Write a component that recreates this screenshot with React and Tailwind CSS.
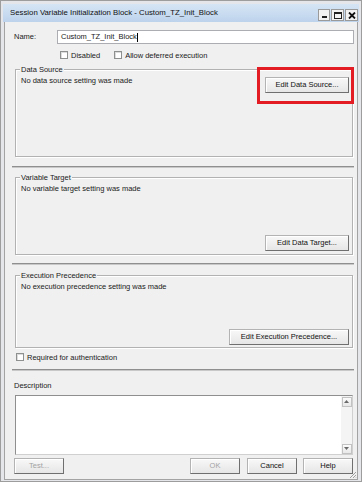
import React from 'react';

function Check({ label, className = '' }) {
  return (
    <div className={`flex items-center ${className}`}>
      <span className="w-[8px] h-[8px] border border-[#8e8f8f] bg-white shadow-[inset_1px_1px_0_#dcdcdc]" />
      <span className="ml-[3px] leading-[9px]">{label}</span>
    </div>
  );
}

function Btn({ children, className = '', disabled }) {
  return (
    <div
      className={`h-[16px] flex items-center justify-center border border-[#b3b3b3] border-r-[#6f6f6f] border-b-[#6f6f6f] bg-gradient-to-b from-[#f8f8f8] to-[#e6e6e6] shadow-[inset_1px_1px_0_#fff] leading-none ${
        disabled ? 'text-[#a3a3a3]' : 'text-[#111]'
      } ${className}`}
    >
      {children}
    </div>
  );
}

function Group({ title, className = '', children }) {
  return (
    <div
      className={`relative ml-[1px] mr-[1px] border border-[#b2b2b2] shadow-[inset_1px_1px_0_#fff,1px_1px_0_#fff] ${className}`}
    >
      <span className="absolute left-[4px] top-[-5px] bg-[#f0f0f0] px-[1px] leading-[9px]">{title}</span>
      {children}
    </div>
  );
}

function Separator({ className = '' }) {
  return <div className={`-ml-[2px] h-[2px] bg-[#8f8f8f] border-b border-[#c8c8c8] ${className}`} />;
}

function Arrow({ up }) {
  return (
    <div className="w-[10px] h-[10px] flex items-center justify-center border border-[#c2c2c2] bg-gradient-to-b from-[#fbfbfb] to-[#e8e8e8]">
      <svg width="5" height="3" viewBox="0 0 5 3">
        <path d={up ? 'M0 3 L2.5 0 L5 3 Z' : 'M0 0 L2.5 3 L5 0 Z'} fill="#6a6a6a" />
      </svg>
    </div>
  );
}

export default function App() {
  return (
    <div className="w-[362px] h-[482px] flex flex-col bg-[#e4e6e9] border border-[#9d9d9d] font-['Liberation_Sans',Arial,sans-serif] text-[7.5px] text-[#1a1a1a] overflow-hidden">
      {/* title bar */}
      <div className="mt-[3px] mx-[2px] h-[18px] flex items-center justify-between bg-gradient-to-b from-[#d6e5f5] to-[#bdd3ec] pl-[7px] pr-[1px]">
        <span className="text-[7.8px] text-[#111]">Session Variable Initialization Block - Custom_TZ_Init_Block</span>
        <div className="flex items-center gap-[1px] self-end mb-[1px]">
          <div className="w-[12px] h-[12px] flex items-end justify-center pb-[2px] border border-[#9a9a9a] bg-[#f3f3f3]">
            <span className="w-[5px] h-[2px] bg-[#222]" />
          </div>
          <div className="w-[13px] h-[12px] flex items-center justify-center border border-[#9a9a9a] bg-[#f3f3f3]">
            <span className="w-[8px] h-[7px] border border-[#222] border-t-2" />
          </div>
          <div className="w-[13px] h-[12px] flex items-center justify-center border border-[#9a9a9a] bg-[#f3f3f3]">
            <svg width="8" height="7" viewBox="0 0 8 7">
              <path d="M1 0.5 L7 6.5 M7 0.5 L1 6.5" stroke="#111" strokeWidth="1.8" />
            </svg>
          </div>
        </div>
      </div>

      {/* content */}
      <div className="relative flex-1 mx-[3px] mb-[1px] flex flex-col bg-[#f0f0f0] border-l border-r border-b border-[#a3a3a3] pl-[9px] pr-[3px]">
        <div className="mt-[8px] h-[14px] flex items-center">
          <span className="w-[43px]">Name:</span>
          <div className="flex-1 h-full flex items-center border border-[#abadb3] bg-white pl-[3px]">
            Custom_TZ_Init_Block<span className="w-px h-[9px] bg-black" />
          </div>
        </div>

        <div className="mt-[6px] h-[10px] flex items-center pl-[46px]">
          <Check label="Disabled" />
          <Check label="Allow deferred execution" className="ml-[14px]" />
        </div>

        <Group title="Data Source" className="mt-[9px] h-[88px]">
          <div className="flex items-start justify-between pt-[6px] pl-[5px] pr-[3px]">
            <span className="leading-[9px]">No data source setting was made</span>
            <Btn className="w-[84px] mt-[1px]">Edit Data Source...</Btn>
          </div>
          <div className="absolute left-[241px] top-[-3px] w-[97px] h-[37px] border-[3px] border-[#e31b23]" />
        </Group>

        <Separator className="mt-[9px]" />

        <Group title="Variable Target" className="mt-[9px] h-[78px] flex flex-col justify-between pt-[6px] pl-[5px] pr-[3px] pb-[3px]">
          <span className="leading-[9px]">No variable target setting was made</span>
          <Btn className="w-[84px] self-end">Edit Data Target...</Btn>
        </Group>

        <Separator className="mt-[8px]" />

        <Group title="Execution Precedence" className="mt-[10px] h-[73px] flex flex-col justify-between pt-[6px] pl-[5px] pr-[3px] pb-[2px]">
          <span className="leading-[9px]">No execution precedence setting was made</span>
          <Btn className="w-[120px] self-end">Edit Execution Precedence...</Btn>
        </Group>

        <div className="mt-[4px] h-[10px] flex items-center pl-[2px]">
          <Check label="Required for authentication" />
        </div>

        <Separator className="mt-[7px]" />

        <div className="mt-[10px] h-[9px] leading-[9px]">Description</div>

        <div className="mt-[5px] ml-[1px] mr-[1px] h-[60px] flex border border-[#8f8f8f] border-r-[#d0d0d0] border-b-[#d0d0d0] bg-white">
          <div className="flex-1" />
          <div className="w-[11px] flex flex-col justify-between bg-[#f4f4f4] p-[0.5px]">
            <Arrow up />
            <Arrow />
          </div>
        </div>

        <div className="mt-[3px] flex items-center mr-[1px]">
          <Btn className="w-[50px]" disabled>Test...</Btn>
          <div className="flex-1" />
          <Btn className="w-[50px]" disabled>OK</Btn>
          <Btn className="w-[50px] ml-[7px]">Cancel</Btn>
          <Btn className="w-[50px] ml-[6px]">Help</Btn>
        </div>

        <svg className="absolute right-[0px] bottom-[0px]" width="9" height="9" viewBox="0 0 9 9">
          <path d="M8 2 L2 8 M8 5 L5 8 M8 7.5 L7.5 8" stroke="#a0a0a0" strokeWidth="1" />
        </svg>
      </div>
    </div>
  );
}
